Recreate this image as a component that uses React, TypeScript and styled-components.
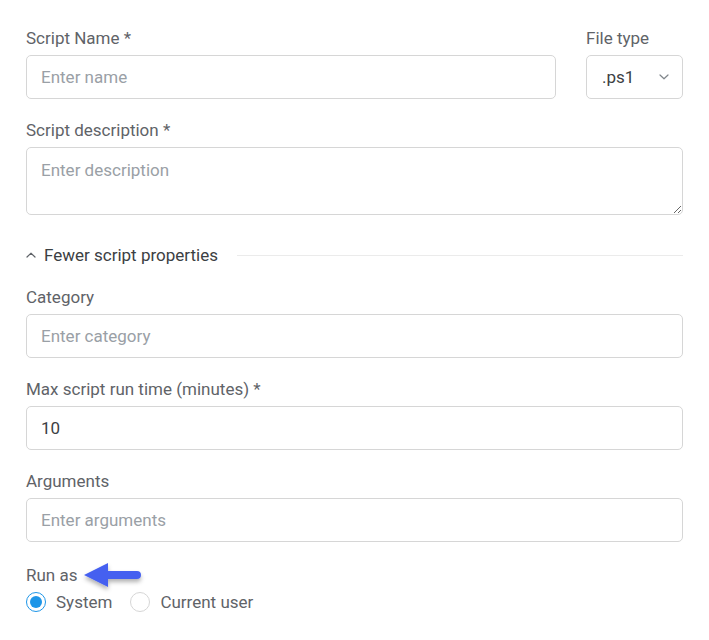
import styled, { createGlobalStyle } from "styled-components";

const GlobalStyle = createGlobalStyle`
    html, body {
        margin: 0;
        padding: 0;
        background: #ffffff;
    }
    body {
        font-family: Roboto, "Liberation Sans", Arial, sans-serif;
    }
    * {
        box-sizing: border-box;
    }
`

const Page = styled.div`
    width: 709px;
    padding: 28px 26px 20px 26px;
    display: flex;
    flex-direction: column;
    gap: 21px;
`

const Row = styled.div`
    display: flex;
    gap: 30px;
`

const Field = styled.div<{ $width?: string }>`
    display: flex;
    flex-direction: column;
    gap: 7px;
    ${({ $width }) => $width ? `width: ${$width};` : "flex: 1;"}
`

const Label = styled.label`
    font-size: 17px;
    line-height: 20px;
    color: #5f6368;
`

const Input = styled.input`
    height: 44px;
    width: 100%;
    border: 1px solid #d6d6d6;
    border-radius: 5px;
    padding: 0 14px;
    font-family: inherit;
    font-size: 17px;
    color: #3c4043;
    outline: none;
    &::placeholder {
        color: #9aa0a6;
    }
`

const TextArea = styled.textarea`
    height: 68px;
    width: 100%;
    border: 1px solid #d6d6d6;
    border-radius: 5px;
    padding: 12px 14px;
    font-family: inherit;
    font-size: 17px;
    line-height: 20px;
    color: #3c4043;
    outline: none;
    resize: vertical;
    display: block;
    &::placeholder {
        color: #9aa0a6;
    }
`

const SelectBox = styled.div`
    height: 44px;
    border: 1px solid #d6d6d6;
    border-radius: 5px;
    padding: 0 13px 0 15px;
    display: flex;
    align-items: center;
    justify-content: space-between;
    font-size: 17px;
    color: #3c4043;
`

const SectionHeader = styled.div`
    display: flex;
    align-items: center;
    gap: 19px;
    margin-top: 9px;
    margin-bottom: 1px;
`

const Toggle = styled.div`
    display: flex;
    align-items: center;
    gap: 8px;
    font-size: 17px;
    line-height: 20px;
    color: #3c4043;
    white-space: nowrap;
`

const Divider = styled.div`
    flex: 1;
    height: 1px;
    background: #ebebeb;
`

const RunAsField = styled.div`
    display: flex;
    flex-direction: column;
    gap: 2px;
    margin-top: -3px;
`

const LabelRow = styled.div`
    display: flex;
    align-items: center;
    gap: 6px;
`

const RadioGroup = styled.div`
    display: flex;
    align-items: center;
    gap: 18px;
`

const RadioOption = styled.label`
    display: flex;
    align-items: center;
    gap: 10px;
    font-size: 17px;
    color: #5f6368;
`

const RadioCircle = styled.span<{ $checked?: boolean }>`
    width: 20px;
    height: 20px;
    border-radius: 50%;
    border: 1.5px solid ${({ $checked }) => $checked ? "#1e96e8" : "#d6d6d6"};
    display: flex;
    align-items: center;
    justify-content: center;
    &::after {
        content: "";
        width: 12px;
        height: 12px;
        border-radius: 50%;
        background: ${({ $checked }) => $checked ? "#1e96e8" : "transparent"};
    }
`

function Chevron({ up }: { up?: boolean }) {
    return (
        <svg width="10" height="6" viewBox="0 0 10 6" fill="none">
            <path
                d={up ? "M1 5L5 1.2L9 5" : "M1 1L5 4.8L9 1"}
                stroke={up ? "#5f6368" : "#80868b"}
                strokeWidth="1.2"
                strokeLinecap="round"
                strokeLinejoin="round"
            />
        </svg>
    )
}

function Arrow() {
    return (
        <svg width="60" height="30" viewBox="0 0 60 30" style={{ overflow: "visible" }}>
            <defs>
                <filter id="arrowShadow" x="-20%" y="-30%" width="140%" height="180%">
                    <feDropShadow dx="0" dy="3" stdDeviation="2" floodColor="#000" floodOpacity="0.3" />
                </filter>
            </defs>
            <g filter="url(#arrowShadow)">
                <path d="M1 15L25 3V11H54a4 4 0 0 1 0 8H25V27Z" fill="#4561f0" />
            </g>
        </svg>
    )
}

export default function App() {
    return (
        <>
            <GlobalStyle />
            <Page>
                <Row>
                    <Field>
                        <Label>Script Name *</Label>
                        <Input placeholder="Enter name" />
                    </Field>
                    <Field $width="97px">
                        <Label>File type</Label>
                        <SelectBox>
                            <span>.ps1</span>
                            <Chevron />
                        </SelectBox>
                    </Field>
                </Row>

                <Field>
                    <Label>Script description *</Label>
                    <TextArea placeholder="Enter description" />
                </Field>

                <SectionHeader>
                    <Toggle>
                        <Chevron up />
                        Fewer script properties
                    </Toggle>
                    <Divider />
                </SectionHeader>

                <Field>
                    <Label>Category</Label>
                    <Input placeholder="Enter category" />
                </Field>

                <Field>
                    <Label>Max script run time (minutes) *</Label>
                    <Input defaultValue="10" />
                </Field>

                <Field>
                    <Label>Arguments</Label>
                    <Input placeholder="Enter arguments" />
                </Field>

                <RunAsField>
                    <LabelRow>
                        <Label>Run as</Label>
                        <Arrow />
                    </LabelRow>
                    <RadioGroup>
                        <RadioOption>
                            <RadioCircle $checked />
                            System
                        </RadioOption>
                        <RadioOption>
                            <RadioCircle />
                            Current user
                        </RadioOption>
                    </RadioGroup>
                </RunAsField>
            </Page>
        </>
    )
}
